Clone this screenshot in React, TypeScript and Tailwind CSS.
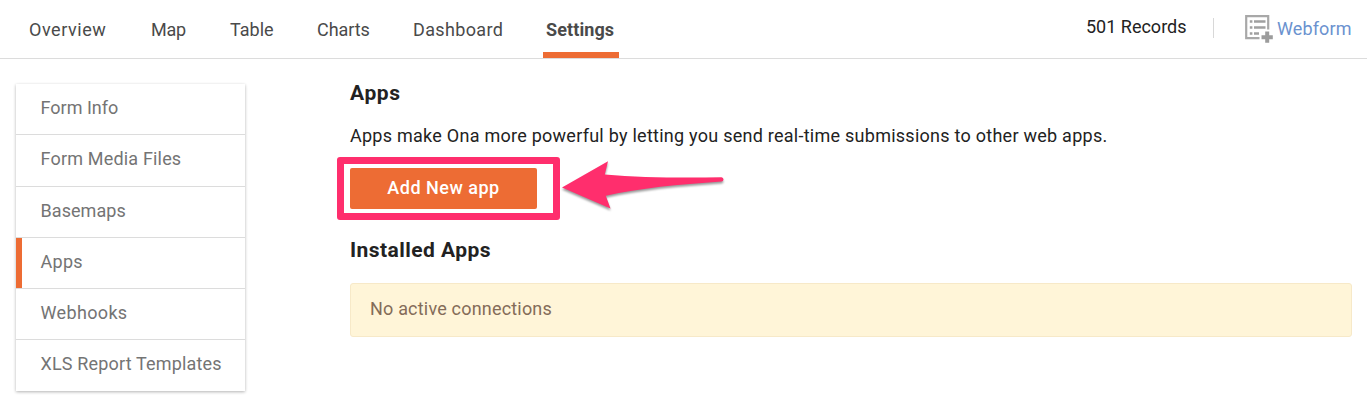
const tabs = [
  { label: 'Overview', box: 'w-[122px]', text: 'tracking-[0.55px]' },
  { label: 'Map', box: 'w-[79px]', text: 'tracking-[-0.3px]' },
  { label: 'Table', box: 'w-[87px]', text: '' },
  { label: 'Charts', box: 'w-[96px]', text: 'tracking-[-0.05px]' },
  { label: 'Dashboard', box: 'w-[130px]', text: 'tracking-[0.35px]' },
];

const sections = [
  { label: 'Form Info', row: 'h-[51px]', text: '' },
  { label: 'Form Media Files', row: 'h-[52px]', text: 'tracking-[0.18px]' },
  { label: 'Basemaps', row: 'h-[51px]', text: 'tracking-[0.06px]' },
  { label: 'Apps', row: 'h-[51px]', text: 'tracking-[0.3px]', active: true },
  { label: 'Webhooks', row: 'h-[51px]', text: 'tracking-[0.35px]' },
  { label: 'XLS Report Templates', row: 'h-[51px]', text: 'tracking-[0.17px]' },
];

function WebformIcon() {
  return (
    <svg width="28" height="28" viewBox="0 0 28 28" fill="none" aria-hidden="true">
      <path d="M14.500 23.2H1.2V1.2H23.2V14.500" stroke="#a8a8a8" strokeWidth="2.2" />
      <path d="M4.8 6.5h2.6M4.8 12.500h2.6M4.8 18.500h2.6M9 6.500h11.500M9 12.500h11.500M9 18.500h5" stroke="#a0a0a0" strokeWidth="2.6" />
      <path d="M22.200 16.500v11.200M16.500 22.200h11.300" stroke="#9c9c9c" strokeWidth="4" />
    </svg>
  );
}

function Arrow() {
  return (
    <svg className="absolute left-[221px] top-0 overflow-visible" width="168" height="62" viewBox="0 0 168 62" aria-hidden="true">
      <path
        className="drop-shadow-[0_2px_1px_rgba(0,0,0,0.4)]"
        d="M4 30.5L50 4.2L46.8 17.5C82 20.5 120 21 163.500 20.300Q165.500 20.500 165.500 22.500Q165.300 24.300 163.500 24.500C120 27.500 82 31 47.800 38.800L52.500 51.500Z"
        fill="#ff2e6d"
      />
    </svg>
  );
}

export default function App() {
  return (
    <div className="h-[406px] w-[1367px] overflow-hidden bg-white font-['Roboto',sans-serif] text-[18px] leading-6 whitespace-nowrap text-[#222]">
      <header className="flex h-[59px] justify-between border-b border-[#dcdcdc] text-[#4a4a4a]">
        <nav className="flex pl-[29px]">
          {tabs.map((t) => (
            <a key={t.label} className={`${t.box} pt-[18px]`}>
              <span className={t.text}>{t.label}</span>
            </a>
          ))}
          <a className="w-[76px] border-b-6 border-[#ed6c34] pt-[18px] pl-[3px] font-bold tracking-[0.1px]">Settings</a>
        </nav>
        <div className="flex w-[281px]">
          <span className="w-[127px] pt-[15px] text-[#222]">501 Records</span>
          <span className="mt-[18px] h-5 w-px bg-[#d8d8d8]" />
          <a className="flex pl-[31px] text-[#6b92cf]">
            <span className="mt-[15px] w-8">
              <WebformIcon />
            </span>
            <span className="pt-[17px] tracking-[0.12px]">Webform</span>
          </a>
        </div>
      </header>

      <div className="flex">
        <aside className="mt-[25px] ml-4 h-[307px] w-[229px] shrink-0 text-[#747474] shadow-[0_1px_3px_rgba(0,0,0,0.3)]">
          {sections.map((s) => (
            <a
              key={s.label}
              className={`${s.row} ${s.active ? 'shadow-[inset_6px_0_0_#ed6c34]' : ''} block border-b border-b-[#dcdcdc] pt-3 pl-[24.5px] last:border-b-0`}
            >
              <span className={s.text}>{s.label}</span>
            </a>
          ))}
        </aside>

        <main className="ml-[105px] w-[1002px] pt-[22px]">
          <h1 className="text-[21px] leading-6 font-bold tracking-[0.6px]">Apps</h1>
          <p className="mt-[19px] tracking-[0.256px]">Apps make Ona more powerful by letting you send real-time submissions to other web apps.</p>
          <div className="relative mt-[9px] -ml-[13px] h-[63px] w-[223px] rounded-[3px] border-7 border-[#ff2e6d] pt-[4px] pl-[6px]">
            <button className="block h-[41px] w-[187px] rounded-[2px] bg-[#ed6c34] pb-px text-center font-medium tracking-[0.5px] text-white">Add New app</button>
            <div className="absolute -top-[7px] -left-[7px]">
              <Arrow />
            </div>
          </div>
          <h2 className="mt-[18px] text-[21px] leading-6 font-bold tracking-[0.45px]">Installed Apps</h2>
          <div className="mt-[21px] h-[54px] rounded-[3px] border border-[#f7e9c8] bg-[#fff5d8] pt-[13px] pl-[19px] tracking-[0.19px] text-[#846c58]">No active connections</div>
        </main>
      </div>
    </div>
  );
}
